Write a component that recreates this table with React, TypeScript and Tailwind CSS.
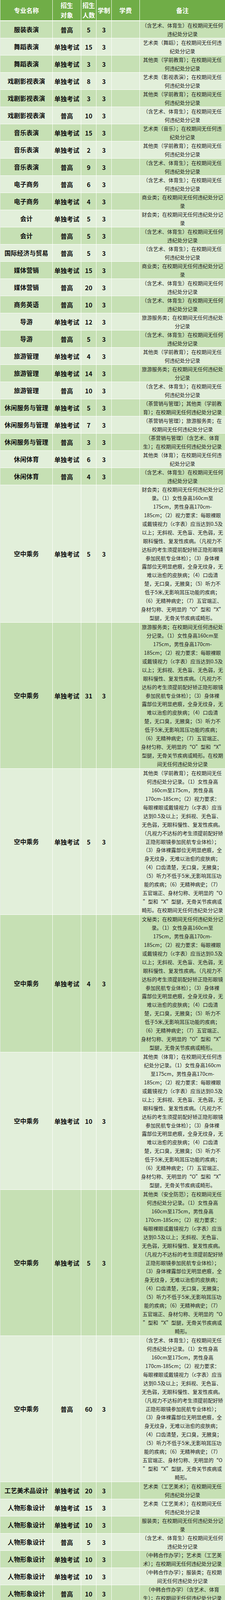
import React from 'react';

type Row = {
  name: string[];
  who: string;
  num: number;
  note: string[];
  kind: 'S' | 'M' | 'L16' | 'L17';
};

const N_ART_SPORT = ['（含艺术、体育生）在校期间无任何', '违纪处分记录'];
const N_ART_SPORT2 = ['（含艺术、体育生）；在校期间无任', '何违纪处分记录'];
const N_PRESCHOOL = ['其他类（学前教育）；在校期间无任', '何违纪处分记录'];
const N_BUSINESS = ['商业类；在校期间无任何违纪处分记', '录'];
const N_TOUR = ['旅游服务类；在校期间无任何违纪处', '分记录'];
const N_CRAFT = ['艺术类（工艺美术）；在校期间无任', '何违纪处分记录'];

// 空中乘务体检要求（两种换行方式）
const TAIL_A = [
  '185cm；（2）视力要求：每眼裸眼',
  '或戴镜视力（c字表）应当达到0.5及',
  '以上；无斜视、无色盲、无色弱，无',
  '眼科慢性、复发性疾病。（凡视力不',
  '达标的考生须提前配好矫正隐形眼镜',
  '参加民航专业体检）；（3）身体裸',
  '露部位无明显疤痕，全身无纹身，无',
  '难以治愈的皮肤病；（4）口齿清',
  '楚，无口臭，无腋臭；（5）听力不',
  '低于5米,无影响耳压功能的疾病；',
  '（6）无精神病史；（7）五官端正、',
  '身材匀称、无明显的“O”型和“X”',
];

const TAIL_B = [
  '160cm至175cm，男性身高',
  '170cm-185cm；（2）视力要求：',
  '每眼裸眼或戴镜视力（c字表）应当',
  '达到0.5及以上；无斜视、无色盲、',
  '无色弱，无眼科慢性、复发性疾病。',
  '（凡视力不达标的考生须提前配好矫',
  '正隐形眼镜参加民航专业体检）；',
  '（3）身体裸露部位无明显疤痕，全',
  '身无纹身，无难以治愈的皮肤病；',
  '（4）口齿清楚，无口臭，无腋臭；',
  '（5）听力不低于5米,无影响耳压功',
  '能的疾病；（6）无精神病史；（7）',
  '五官端正、身材匀称、无明显的“O',
  '”型和“X”型腿，无骨关节疾病或',
];

// 每行高度（含底部 1px 白线）
const ROW_H: Record<Row['kind'], string> = {
  S: 'h-[44px]',
  M: 'h-[52px]',
  L16: 'h-[352px]',
  L17: 'h-[374px]',
};

const r = (name: string | string[], who: string, num: number, note: string[], kind: Row['kind'] = 'S'): Row => ({
  name: typeof name === 'string' ? [name] : name,
  who,
  num,
  note,
  kind,
});

const EXAM = '单独考试';
const GK = '普高';

const ROWS: Row[] = [
  r('服装表演', GK, 5, N_ART_SPORT),
  r('舞蹈表演', EXAM, 15, ['艺术类（舞蹈）；在校期间无任何违', '纪处分记录']),
  r('舞蹈表演', EXAM, 3, N_PRESCHOOL),
  r('戏剧影视表演', EXAM, 8, ['艺术类（影视表演）；在校期间无任', '何违纪处分记录']),
  r('戏剧影视表演', EXAM, 3, N_PRESCHOOL),
  r('戏剧影视表演', GK, 10, N_ART_SPORT2),
  r('音乐表演', EXAM, 15, ['艺术类（音乐）；在校期间无任何违', '纪处分记录']),
  r('音乐表演', EXAM, 2, N_PRESCHOOL),
  r('音乐表演', GK, 9, N_ART_SPORT2),
  r('电子商务', GK, 6, N_ART_SPORT2),
  r('电子商务', EXAM, 4, N_BUSINESS),
  r('会计', EXAM, 5, ['财会类；在校期间无任何违纪处分记', '录']),
  r('会计', GK, 5, N_ART_SPORT),
  r('国际经济与贸易', GK, 5, N_ART_SPORT2),
  r('媒体营销', EXAM, 15, N_BUSINESS),
  r('媒体营销', GK, 20, N_ART_SPORT),
  r('商务英语', GK, 10, N_ART_SPORT),
  r('导游', EXAM, 12, N_TOUR),
  r('导游', GK, 5, N_ART_SPORT),
  r('旅游管理', EXAM, 4, N_PRESCHOOL),
  r('旅游管理', EXAM, 14, N_TOUR),
  r('旅游管理', GK, 10, N_ART_SPORT2),
  r('休闲服务与管理', EXAM, 5, ['（茶营销与管理）；其他类（学前教', '育）；在校期间无任何违纪处分记录']),
  r('休闲服务与管理', EXAM, 7, ['（茶营销与管理）；旅游服务类；在', '校期间无任何违纪处分记录']),
  r('休闲服务与管理', GK, 3, ['（茶营销与管理）（含艺术、体育', '生）；在校期间无任何违纪处分记录']),
  r('休闲体育', EXAM, 6, ['其他类（体育）；在校期间无任何违', '纪处分记录']),
  r('休闲体育', GK, 4, N_ART_SPORT),
  r('空中乘务', EXAM, 5, [
    '财会类；在校期间无任何违纪处分记',
    '录。（1）女性身高160cm至',
    '175cm，男性身高170cm-',
    ...TAIL_A,
    '型腿，无骨关节疾病或畸形。',
  ], 'L16'),
  r('空中乘务', EXAM, 31, [
    '旅游服务类；在校期间无任何违纪处',
    '分记录。（1）女性身高160cm至',
    '175cm，男性身高170cm-',
    ...TAIL_A,
    '型腿，无骨关节疾病或畸形。在校期',
    '间无任何违纪处分记录',
  ], 'L17'),
  r('空中乘务', EXAM, 5, [
    '其他类（学前教育）；在校期间无任',
    '何违纪处分记录。（1）女性身高',
    ...TAIL_B,
    '畸形。在校期间无任何违纪处分记录',
  ], 'L17'),
  r('空中乘务', EXAM, 4, [
    '文秘类；在校期间无任何违纪处分记',
    '录。（1）女性身高160cm至',
    '175cm，男性身高170cm-',
    ...TAIL_A,
    '型腿，无骨关节疾病或畸形。',
  ], 'L16'),
  r('空中乘务', EXAM, 10, [
    '其他类（体育）；在校期间无任何违',
    '纪处分记录。（1）女性身高160cm',
    '至175cm，男性身高170cm-',
    ...TAIL_A,
    '型腿，无骨关节疾病或畸形。',
  ], 'L16'),
  r('空中乘务', EXAM, 5, [
    '其他类（安全防范）；在校期间无任',
    '何违纪处分记录。（1）女性身高',
    ...TAIL_B,
    '畸形。',
  ], 'L17'),
  r('空中乘务', GK, 60, [
    '（含艺术、体育生）；在校期间无任',
    '何违纪处分记录。（1）女性身高',
    ...TAIL_B,
    '畸形。',
  ], 'L17'),
  r('工艺美术品设计', EXAM, 20, N_CRAFT),
  r('人物形象设计', EXAM, 15, N_CRAFT),
  r('人物形象设计', EXAM, 10, ['服装类；在校期间无任何违纪处分记', '录']),
  r('人物形象设计', GK, 5, N_ART_SPORT),
  r('人物形象设计', EXAM, 10, ['（中韩合作办学）；艺术类（工艺美', '术）；在校期间无任何违纪处分记录']),
  r('人物形象设计', EXAM, 10, ['（中韩合作办学）；服装类；在校期', '间无任何违纪处分记录']),
  r('人物形象设计', GK, 10, ['（中韩合作办学）（含艺术、体育', '生）；在校期间无任何违纪处分记录']),
  r(['舞台艺术设计与', '制作'], EXAM, 12, N_CRAFT, 'M'),
  r(['舞台艺术设计与', '制作'], GK, 8, N_ART_SPORT, 'M'),
  r(['广播影视节目制', '作'], EXAM, 11, ['（影视后期制作）；艺术类（工艺美', '术）；在校期间无任何违纪处分记录'], 'M'),
  r(['广播影视节目制', '作'], EXAM, 16, ['（影视后期制作）计算机类；在校期', '间无任何违纪处分记录'], 'M'),
  r(['广播影视节目制', '作'], GK, 11, ['（影视后期制作）（含艺术、体育', '生）；在校期间无任何违纪处分记录'], 'M'),
  r('摄影摄像技术', EXAM, 8, N_CRAFT),
  r('摄影摄像技术', GK, 16, N_ART_SPORT),
  r('影视编导', GK, 8, N_ART_SPORT),
];

// 单元格：右侧 1px 白线
const cell = 'flex h-full shrink-0 flex-col items-center justify-center overflow-hidden border-r border-white text-center';

export default function App() {
  return (
    <div className="w-[576px] border-l border-[#e8e8e8] bg-white font-['Noto_Sans_CJK_SC','Noto_Sans',sans-serif]">
      {/* 表头 */}
      <div className="flex h-[54px] border-b-2 border-white text-[16px] font-bold leading-[25px] text-white">
        <div className={`${cell} w-[134px] bg-[#70ad47]`}>专业名称</div>
        <div className={`${cell} w-[73px] bg-[#70ad47]`}>
          <span>招生</span>
          <span>对象</span>
        </div>
        <div className={`${cell} w-[39px] bg-[#70ad47]`}>
          <span>招生</span>
          <span>人数</span>
        </div>
        <div className={`${cell} w-[39px] bg-[#70ad47]`}>学制</div>
        <div className={`${cell} w-[72px] bg-[#70ad47]`}>学费</div>
        <div className={`${cell} flex-1 border-r-0 bg-[#70ad47]`}>备注</div>
      </div>

      {/* 表体 */}
      {ROWS.map((row, i) => {
        const bg = i % 2 === 0 ? 'bg-[#c6e0b4]' : 'bg-[#e2efda]';
        const lh = row.kind === 'L16' || row.kind === 'L17' ? 'leading-[21.9px]' : 'leading-[21.5px]';
        return (
          <div key={i} className={`flex overflow-hidden border-b border-white text-[#111] ${ROW_H[row.kind]}`}>
            <div className={`${cell} ${bg} w-[134px] text-[16px] font-bold leading-[25px]`}>
              {row.name.map((n, k) => (
                <span key={k} className="whitespace-nowrap">{n}</span>
              ))}
            </div>
            <div className={`${cell} ${bg} w-[73px] whitespace-nowrap text-[16px] font-bold leading-[24px]`}>{row.who}</div>
            <div className={`${cell} ${bg} w-[39px] text-[16px] font-bold leading-[24px]`}>{row.num}</div>
            <div className={`${cell} ${bg} w-[39px] text-[16px] font-bold leading-[24px]`}>3</div>
            <div className={`${cell} ${bg} w-[72px]`} />
            <div className={`${cell} ${bg} ${lh} flex-1 border-r-0 text-[13px] text-[#222]`}>
              {row.note.map((t, k) => (
                <span key={k} className="whitespace-nowrap">{t}</span>
              ))}
            </div>
          </div>
        );
      })}
    </div>
  );
}
